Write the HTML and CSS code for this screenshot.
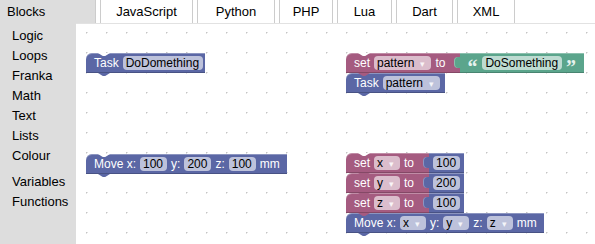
FILE: index.html
```html
<!DOCTYPE html>
<html lang="en">
<head>
    <meta charset="UTF-8">
    <title>Blockly Franka</title>
    <link rel="stylesheet" href="styles.css">
</head>
<body>
    <div class="tabs">
        <div class="tab tab-active">Blocks</div>
        <div class="tab tab-js">JavaScript</div>
        <div class="tab tab-py">Python</div>
        <div class="tab tab-php">PHP</div>
        <div class="tab tab-lua">Lua</div>
        <div class="tab tab-dart">Dart</div>
        <div class="tab tab-xml">XML</div>
    </div>
    <div class="main">
        <ul class="toolbox">
            <li>Logic</li>
            <li>Loops</li>
            <li>Franka</li>
            <li>Math</li>
            <li>Text</li>
            <li>Lists</li>
            <li>Colour</li>
            <li class="sep">Variables</li>
            <li>Functions</li>
        </ul>
        <div class="workspace">
            <!-- Task block on its own -->
            <div class="stack stack-a">
                <div class="block proc top pad-tight">Task <span class="field">DoDomething</span></div>
            </div>

            <!-- set pattern + Task pattern -->
            <div class="stack stack-b">
                <div class="row">
                    <div class="block var top input">set <span class="field dd">pattern</span> to</div>
                    <div class="value text">
                        <span class="quote">“</span>
                        <span class="field">DoSomething</span>
                        <span class="quote">”</span>
                    </div>
                </div>
                <div class="block proc">Task <span class="field dd">pattern</span></div>
            </div>

            <!-- Move with numbers -->
            <div class="stack stack-d">
                <div class="block proc top pad-wide">Move x: <span class="field">100</span> y: <span class="field">200</span> z: <span class="field">100</span> mm</div>
            </div>

            <!-- set x/y/z + Move with variables -->
            <div class="stack stack-e">
                <div class="row">
                    <div class="block var top input">set <span class="field dd">x</span> to</div>
                    <div class="value num"><span class="field">100</span></div>
                </div>
                <div class="row">
                    <div class="block var input">set <span class="field dd">y</span> to</div>
                    <div class="value num"><span class="field">200</span></div>
                </div>
                <div class="row">
                    <div class="block var input">set <span class="field dd">z</span> to</div>
                    <div class="value num"><span class="field">100</span></div>
                </div>
                <div class="block proc pad-wide">Move x: <span class="field dd">x</span> y: <span class="field dd">y</span> z: <span class="field dd">z</span> mm</div>
            </div>
        </div>
    </div>
</body>
</html>
```
FILE: styles.css
```css
body {
    margin: 0;
    font-family: "Liberation Sans", Arial, sans-serif;
    color: #000;
    background-color: #fff;
    overflow: hidden;
}

/* top tabs */
.tabs {
    display: flex;
    height: 23px;
    font-size: 13px;
    line-height: 23px;
}

.tab {
    box-sizing: border-box;
    margin-left: 4px;
    border-left: 1px solid #ccc;
    border-right: 1px solid #ccc;
    text-align: center;
}

.tab-active {
    width: 96px;
    margin-left: 0;
    border-left: none;
    padding-left: 7px;
    text-align: left;
    background-color: #ddd;
}

.tab-js { width: 93px; }
.tab-py { width: 78px; }
.tab-php { width: 54px; }
.tab-lua { width: 55px; }
.tab-dart { width: 57px; }
.tab-xml { width: 58px; }

.main {
    display: flex;
    height: 221px;
}

/* toolbox */
.toolbox {
    width: 76px;
    margin: 0;
    padding: 3px 0 0 12px;
    box-sizing: border-box;
    list-style: none;
    background-color: #ddd;
    font-size: 13px;
    line-height: 20px;
}

.toolbox .sep {
    margin-top: 6px;
}

/* workspace */
.workspace {
    flex: 1;
    position: relative;
    border-top: 1px solid #e2e2e2;
    background-color: #fff;
    background-image: radial-gradient(circle at 0.5px 0.5px, #c4c4c4 0.8px, transparent 1.2px);
    background-size: 20px 20px;
    background-position: 10px 8px;
}

.stack {
    position: absolute;
    display: flex;
    flex-direction: column;
    align-items: flex-start;
}

.stack-a { left: 10px; top: 29px; }
.stack-b { left: 270px; top: 29px; }
.stack-d { left: 10px; top: 130px; }
.stack-e { left: 270px; top: 129px; }

.row {
    display: flex;
}

/* blocks */
.block,
.value {
    display: flex;
    align-items: center;
    gap: 4px;
    height: 20px;
    box-sizing: border-box;
    position: relative;
    color: #fff;
    font-size: 12px;
    white-space: nowrap;
    box-shadow: inset 0 1px 0 rgba(255, 255, 255, 0.3), inset 0 -1px 0 rgba(0, 0, 0, 0.2);
}

.block {
    padding: 0 5px 0 8px;
    border-top-left-radius: 6px;
}

.block.pad-tight { padding-right: 2px; }
.block.pad-wide { padding-right: 7px; }
.block.input { padding-right: 15px; }

.proc { background-color: #5b67a5; }
.var { background-color: #a55b80; }
.text { background-color: #5ba58c; }
.num { background-color: #5b67a5; }

/* next-statement tab under each block */
.block::after {
    content: "";
    position: absolute;
    left: 12px;
    bottom: -3px;
    width: 12px;
    height: 3px;
    background-color: inherit;
    clip-path: polygon(0 0, 100% 0, 60% 100%, 40% 100%);
    z-index: 1;
}

/* previous-statement notch on the top block of a stack */
.block.top::before {
    content: "";
    position: absolute;
    left: 12px;
    top: 0;
    width: 12px;
    height: 3px;
    background-color: #fff;
    clip-path: polygon(0 0, 100% 0, 60% 100%, 40% 100%);
    z-index: 1;
}

/* value blocks with their output tab */
.value {
    padding: 0 4px 0 4px;
}

.value.text {
    padding: 0 7px;
}

.value::before {
    content: "";
    position: absolute;
    left: -6px;
    top: 4px;
    width: 6px;
    height: 11px;
    background-color: inherit;
    border-radius: 4px 0 0 4px;
    box-shadow: inset 1px 0 0 rgba(255, 255, 255, 0.3);
}

.quote {
    width: 11px;
    height: 20px;
    font-family: "Liberation Serif", serif;
    font-size: 20px;
    line-height: 28px;
    font-weight: bold;
    color: #e6f2ee;
}

/* editable fields */
.field {
    height: 14px;
    line-height: 14px;
    padding: 0 4px 0 3px;
    border-radius: 4px;
    background-color: rgba(255, 255, 255, 0.6);
    color: #000;
}

.field.dd {
    padding-right: 5px;
}

.field.dd::after {
    content: "▾";
    display: inline-block;
    width: 6px;
    margin-left: 6px;
    font-size: 9px;
    color: rgba(255, 255, 255, 0.85);
}
```
